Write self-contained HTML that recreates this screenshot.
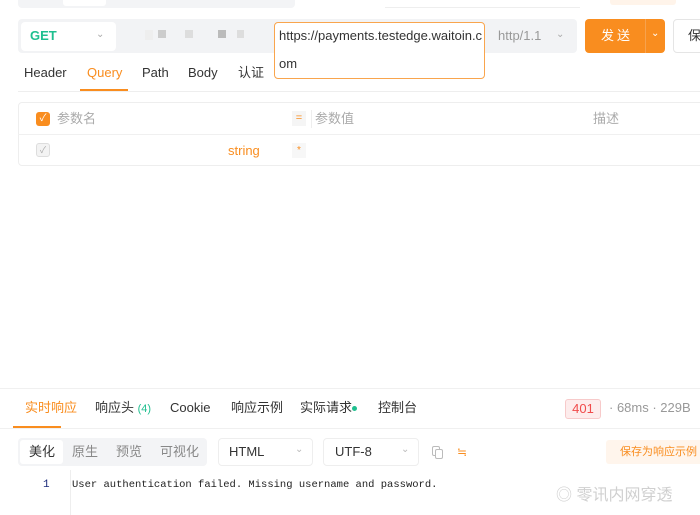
<!DOCTYPE html>
<html><head><meta charset="utf-8"><style>
*{margin:0;padding:0;box-sizing:border-box}
body{width:700px;height:515px;background:#fff;position:relative;overflow:hidden;font-family:"Liberation Sans","Noto Sans CJK SC",sans-serif;font-size:13px;color:#333}
.a{position:absolute}
.t{position:absolute;white-space:nowrap;line-height:16px}
</style></head><body>
<div class="a" style="left:18px;top:0;width:277px;height:8px;background:#f3f4f6;border-radius:0 0 4px 4px"></div>
<div class="a" style="left:63px;top:0;width:43px;height:6px;background:#fff;border-radius:0 0 3px 3px"></div>
<div class="a" style="left:385px;top:7px;width:195px;height:1px;background:#eee"></div>
<div class="a" style="left:610px;top:0;width:66px;height:5px;background:#fff4ea;border-radius:0 0 3px 3px"></div>

<div class="a" style="left:18px;top:19px;width:559px;height:34px;background:#f2f3f5;border-radius:4px"></div>
<div class="a" style="left:21px;top:22px;width:95px;height:29px;background:#fff;border-radius:4px"></div>
<div class="t" style="left:30px;top:28px;color:#1fbf8f;font-weight:bold;font-size:13px">GET</div>
<div class="t" style="left:96px;top:27px;color:#aaa;font-size:10px">⌄</div>
<div class="a" style="left:145px;top:30px;width:8px;height:10px;background:#eee"></div>
<div class="a" style="left:158px;top:30px;width:8px;height:8px;background:#ccc"></div>
<div class="a" style="left:185px;top:30px;width:8px;height:8px;background:#ddd"></div>
<div class="a" style="left:218px;top:30px;width:8px;height:8px;background:#bbb"></div>
<div class="a" style="left:237px;top:30px;width:7px;height:8px;background:#ddd"></div>
<div class="a" style="left:274px;top:22px;width:211px;height:57px;background:#fff;border:1.5px solid #f9a54d;border-radius:4px"></div>
<div class="t" style="left:279px;top:28px;font-size:13px;color:#333">https://payments.testedge.waitoin.c</div>
<div class="t" style="left:279px;top:56px;font-size:13px;color:#333">om</div>
<div class="t" style="left:498px;top:28px;color:#999">http/1.1</div>
<div class="t" style="left:556px;top:27px;color:#aaa;font-size:10px">⌄</div>
<div class="a" style="left:585px;top:19px;width:80px;height:34px;background:#f98d1f;border-radius:4px"></div>
<div class="a" style="left:645px;top:19px;width:1px;height:34px;background:#f7a24d"></div>
<div class="t" style="left:601px;top:28px;color:#fff;font-size:13px;letter-spacing:3px">发送</div>
<div class="t" style="left:651px;top:26px;color:#fff;font-size:10px">⌄</div>
<div class="a" style="left:673px;top:19px;width:40px;height:34px;background:#fff;border:1px solid #e5e5e5;border-radius:4px"></div>
<div class="t" style="left:688px;top:28px;color:#333">保</div>

<div class="t" style="left:24px;top:65px;color:#333">Header</div>
<div class="t" style="left:87px;top:65px;color:#f98d1f">Query</div>
<div class="t" style="left:142px;top:65px;color:#333">Path</div>
<div class="t" style="left:188px;top:65px;color:#333">Body</div>
<div class="t" style="left:238px;top:65px;color:#333">认证</div>
<div class="a" style="left:18px;top:91px;width:682px;height:1px;background:#eee"></div>
<div class="a" style="left:80px;top:89px;width:48px;height:2px;background:#f98d1f"></div>

<div class="a" style="left:18px;top:102px;width:690px;height:64px;border:1px solid #eee;border-radius:4px"></div>
<div class="a" style="left:18px;top:134px;width:682px;height:1px;background:#f0f0f0"></div>
<div class="a" style="left:36px;top:112px;width:14px;height:14px;background:#f98d1f;border-radius:3px;color:#fff;font-size:10px;text-align:center;line-height:14px">✓</div>
<div class="t" style="left:57px;top:111px;color:#aaa">参数名</div>
<div class="a" style="left:292px;top:111px;width:14px;height:15px;background:#f5f5f5;color:#f98d1f;font-size:11px;text-align:center;line-height:15px">=</div>
<div class="a" style="left:311px;top:110px;width:1px;height:18px;background:#eee"></div>
<div class="t" style="left:315px;top:111px;color:#aaa">参数值</div>
<div class="t" style="left:593px;top:111px;color:#aaa">描述</div>
<div class="a" style="left:36px;top:143px;width:14px;height:14px;background:#f3f3f3;border:1px solid #ddd;border-radius:3px;color:#aaa;font-size:9px;text-align:center;line-height:12px">✓</div>
<div class="t" style="left:228px;top:143px;color:#f98d1f">string</div>
<div class="a" style="left:292px;top:143px;width:14px;height:15px;background:#f7f7f7;color:#f98d1f;font-size:10px;text-align:center;line-height:16px">*</div>

<div class="a" style="left:0;top:388px;width:700px;height:1px;background:#f0f0f0"></div>
<div class="t" style="left:25px;top:400px;color:#f98d1f">实时响应</div>
<div class="t" style="left:95px;top:400px">响应头 <span style="color:#1fbf8f;font-size:11px">(4)</span></div>
<div class="t" style="left:170px;top:400px">Cookie</div>
<div class="t" style="left:231px;top:400px">响应示例</div>
<div class="t" style="left:300px;top:400px">实际请求</div>
<div class="a" style="left:352px;top:406px;width:5px;height:5px;border-radius:50%;background:#1fbf8f"></div>
<div class="t" style="left:378px;top:400px">控制台</div>
<div class="a" style="left:565px;top:399px;width:36px;height:20px;background:#fdecec;border:1px solid #f7caca;border-radius:3px;color:#f04b4b;text-align:center;line-height:18px">401</div>
<div class="t" style="left:609px;top:400px;color:#999">· 68ms · 229B</div>
<div class="a" style="left:0;top:428px;width:700px;height:1px;background:#f0f0f0"></div>
<div class="a" style="left:13px;top:426px;width:48px;height:2px;background:#f98d1f"></div>

<div class="a" style="left:18px;top:438px;width:189px;height:28px;background:#f3f4f6;border-radius:4px"></div>
<div class="a" style="left:20px;top:440px;width:43px;height:24px;background:#fff;border-radius:3px"></div>
<div class="t" style="left:29px;top:444px">美化</div>
<div class="t" style="left:72px;top:444px;color:#888">原生</div>
<div class="t" style="left:116px;top:444px;color:#888">预览</div>
<div class="t" style="left:160px;top:444px;color:#888">可视化</div>
<div class="a" style="left:218px;top:438px;width:95px;height:28px;border:1px solid #eee;border-radius:4px"></div>
<div class="t" style="left:229px;top:444px">HTML</div>
<div class="t" style="left:295px;top:442px;color:#bbb;font-size:10px">⌄</div>
<div class="a" style="left:323px;top:438px;width:96px;height:28px;border:1px solid #eee;border-radius:4px"></div>
<div class="t" style="left:335px;top:444px">UTF-8</div>
<div class="t" style="left:401px;top:442px;color:#bbb;font-size:10px">⌄</div>
<div class="a" style="left:432px;top:446px;width:8px;height:10px;border:1px solid #bbb;border-radius:2px"></div>
<div class="a" style="left:435px;top:449px;width:8px;height:10px;border:1px solid #bbb;border-radius:2px;background:#fff"></div>
<div class="t" style="left:457px;top:444px;color:#f98d1f;font-size:12px">≒</div>
<div class="a" style="left:606px;top:440px;width:100px;height:24px;background:#fff5ec;border-radius:3px"></div>
<div class="t" style="left:620px;top:444px;color:#f98d1f;font-size:11px">保存为响应示例</div>

<div class="a" style="left:70px;top:470px;width:1px;height:45px;background:#eee"></div>
<div class="t" style="left:43px;top:477px;color:#1a2a7a;font-family:'Liberation Mono',monospace;font-size:11px">1</div>
<div class="t" style="left:72px;top:477px;color:#222;font-family:'Liberation Mono',monospace;font-size:10.5px">User authentication failed. Missing username and password.</div>
<div class="t" style="left:556px;top:488px;color:#d0d0d0;font-size:16px">◎ 零讯内网穿透</div>
</body></html>
